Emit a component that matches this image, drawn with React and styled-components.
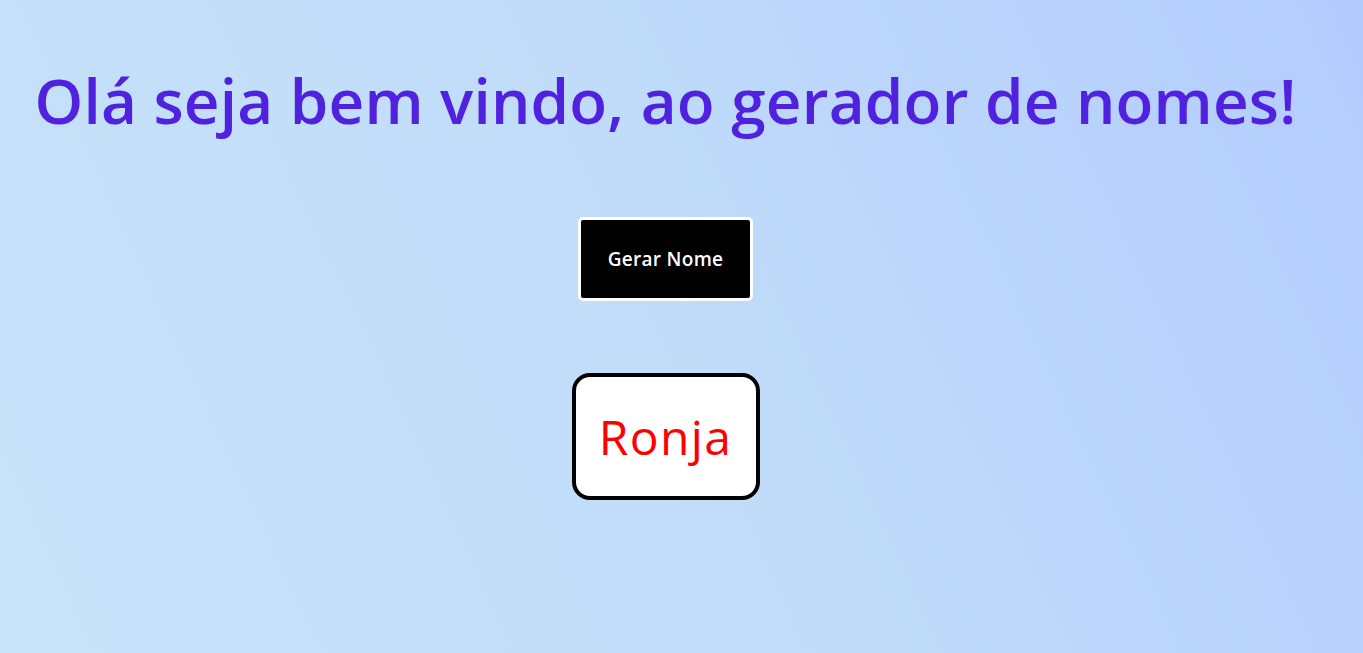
import React, { useState } from 'react'
import styled, { createGlobalStyle } from 'styled-components'

const GlobalStyle = createGlobalStyle`
  html, body {
    margin: 0;
    padding: 0;
  }
  body {
    min-height: 100vh;
    background: linear-gradient(65deg, #c7e3f9 0%, #c0dcf9 50%, #b3ccfe 100%);
    font-family: "Open Sans", "DejaVu Sans", sans-serif;
  }
`

const Page = styled.main`
  min-height: 100vh;
  box-sizing: border-box;
  padding: 60px 32px 0 0;
  display: flex;
  flex-direction: column;
  align-items: center;
`

const Title = styled.h1`
  margin: 0;
  font-size: 62px;
  font-weight: 600;
  line-height: 80px;
  color: #5121e0;
  letter-spacing: 0.2px;
  white-space: nowrap;
`

const Button = styled.button`
  margin-top: 77px;
  width: 175px;
  height: 84px;
  background: #000;
  color: #fff;
  border: 3px solid #fff;
  border-radius: 5px;
  font-family: "Open Sans", "DejaVu Sans", sans-serif;
  font-size: 19px;
  font-weight: 600;
  letter-spacing: 0.3px;
  cursor: pointer;
`

const NameBox = styled.div`
  margin-top: 72px;
  width: 188px;
  height: 127px;
  box-sizing: border-box;
  display: flex;
  align-items: center;
  justify-content: center;
  background: #fff;
  border: 4px solid #000;
  border-radius: 18px;
  color: #ff0000;
  font-size: 48px;
  letter-spacing: 1.4px;
`

const names = ['Ronja', 'Ana', 'Bruno', 'Clara', 'Davi', 'Elisa']

export default function App() {
  const [name, setName] = useState('Ronja')

  const gerar = () => {
    setName(names[Math.floor(Math.random() * names.length)])
  }

  return (
    <>
      <GlobalStyle />
      <Page>
        <Title>Olá seja bem vindo, ao gerador de nomes!</Title>
        <Button onClick={gerar}>Gerar Nome</Button>
        <NameBox>{name}</NameBox>
      </Page>
    </>
  )
}
